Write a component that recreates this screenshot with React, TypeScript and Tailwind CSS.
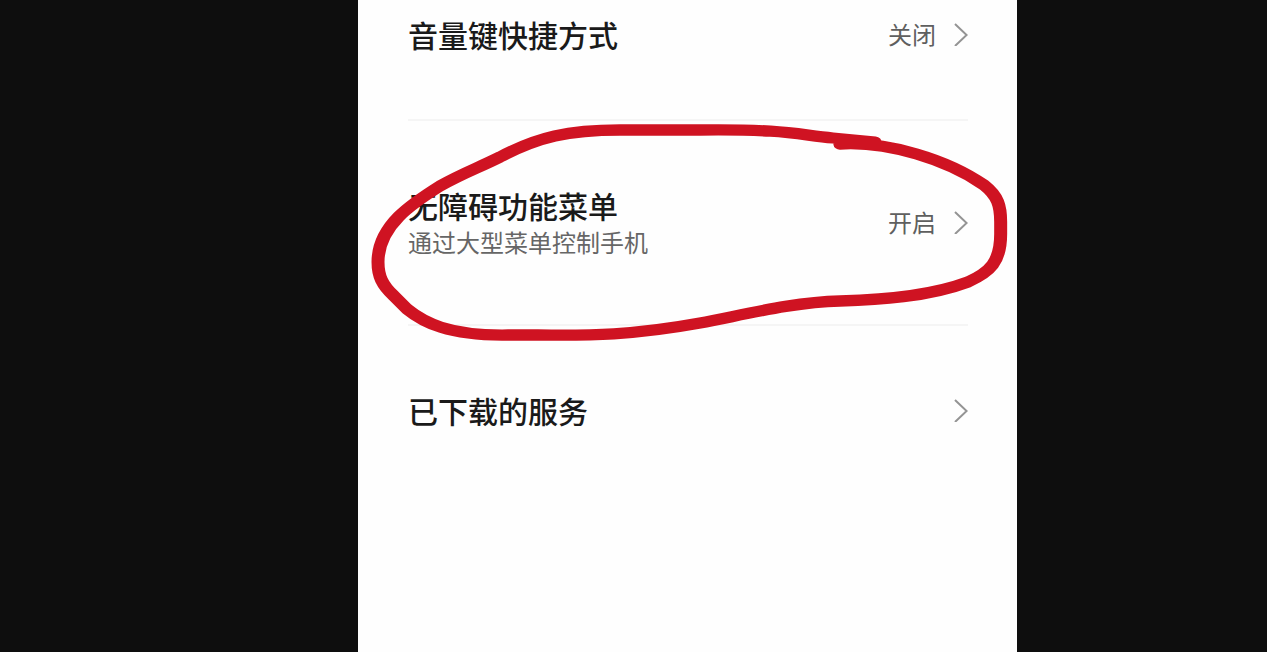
const MARKER_PATH = [
  "M419 144",
  "C461 141 513 160 544.3 185",
  "C556.5 196 558.8 206 558.8 222",
  "L558.8 234",
  "C558.8 262 549.6 272 530.4 282",
  "C495.7 297 452.2 300 419 301",
  "C378.3 302 334.8 315 297.4 323",
  "C230.4 337 191.3 335 156.5 335",
  "L130.4 335",
  "C78.3 336 56.5 322 42.6 309",
  "L31.3 296",
  "C20.9 285 17.4 276 17.4 262",
  "C17.4 225 47.8 203 71.3 186",
  "C91.3 173 104.3 168 123.5 157",
  "C156.5 137 182.6 130 227.8 130",
  "L297.4 130",
  "C373.9 129 382.6 135 413 138",
  "L449.6 142",
].join("");

function Chevron() {
  return (
    <svg className="h-6 w-3.5 shrink-0" viewBox="0 0 14 24" fill="none" aria-hidden="true">
      <path d="M1 2L12.6 13L1 24" stroke="#949494" strokeWidth="2" />
    </svg>
  );
}

type RowProps = { title: string; detail?: string; value?: string; first?: boolean };

function Row({ title, detail, value, first }: RowProps) {
  return (
    <li className="border-b-2 border-[#f5f5f5] last:border-b-0">
      <button
        type="button"
        className={`flex w-full items-center justify-between pb-[65px] text-left ${first ? "pt-3.5" : "pt-16"}`}
      >
        <span className="flex flex-col">
          <span className="text-[30px] leading-10 font-medium text-[#1a1a1a]">{title}</span>
          {detail && <span className="text-2xl leading-[34px] text-[#666666]">{detail}</span>}
        </span>
        <span className="flex items-center gap-[18px] text-2xl text-[#5f5f5f]">
          {value}
          <Chevron />
        </span>
      </button>
    </li>
  );
}

export default function App() {
  return (
    <div className="grid min-h-screen grid-cols-[358fr_659fr_250fr] bg-[#0e0e0e] font-['Noto_Sans_CJK_SC',sans-serif]">
      <main className="relative col-start-2 bg-[#fefefe] pr-[49px] pl-[50px]">
        <ul>
          <Row title="音量键快捷方式" value="关闭" first />
          <Row title="无障碍功能菜单" detail="通过大型菜单控制手机" value="开启" />
          <Row title="已下载的服务" />
        </ul>
        <svg
          className="pointer-events-none absolute top-0 left-0 h-[652px] w-full"
          viewBox="0 0 573 652"
          preserveAspectRatio="none"
          fill="none"
          aria-hidden="true"
        >
          <path
            d={MARKER_PATH}
            stroke="#cf1322"
            strokeWidth="11.3"
            strokeLinecap="round"
            strokeLinejoin="round"
          />
        </svg>
      </main>
    </div>
  );
}
